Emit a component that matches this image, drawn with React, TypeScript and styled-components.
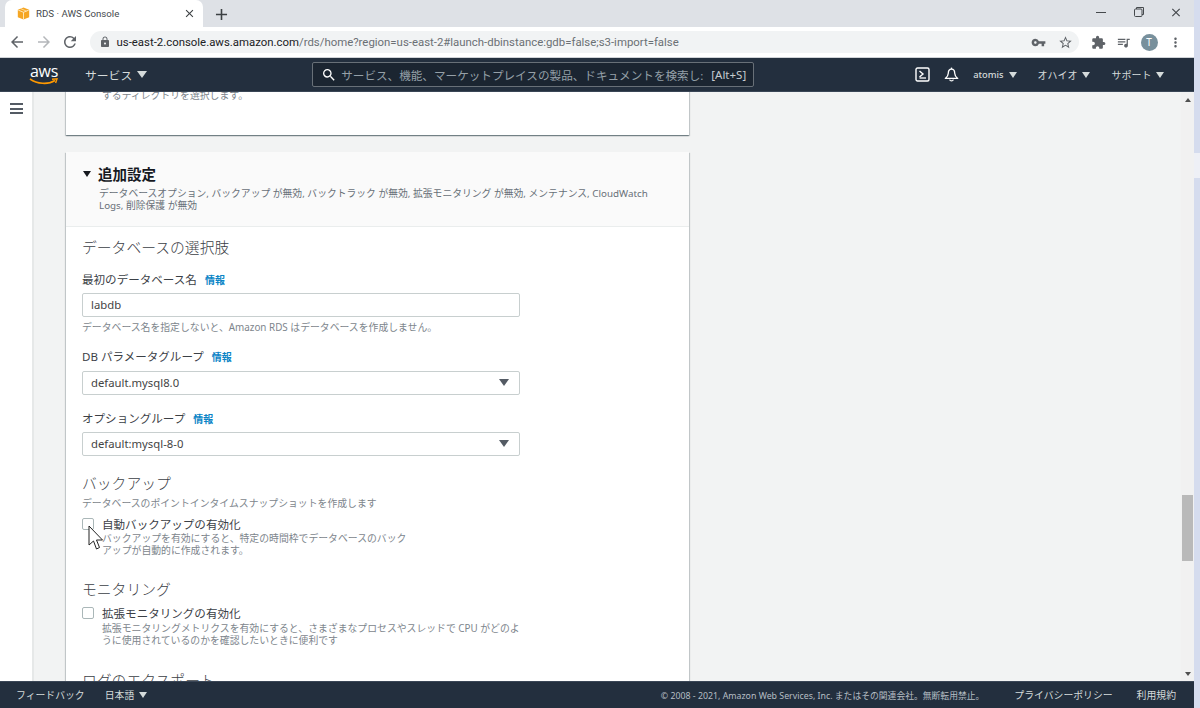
import React from 'react';
import styled, { createGlobalStyle } from 'styled-components';
import {
  MdAdd,
  MdArrowBack,
  MdArrowForward,
  MdClose,
  MdExtension,
  MdLock,
  MdMoreVert,
  MdQueueMusic,
  MdRefresh,
  MdSearch,
  MdStarBorder,
  MdVpnKey,
} from 'react-icons/md';

const FONT = `"Noto Sans", "Noto Sans CJK JP", sans-serif`;

const GlobalStyle = createGlobalStyle`
  html, body {
    margin: 0;
    padding: 0;
    height: 708px;
    overflow: hidden;
    font-family: ${FONT};
    background: #d6dcef;
  }
  * { box-sizing: border-box; }
`;

const Screen = styled.div`
  display: flex;
  width: 1200px;
  height: 708px;
  overflow: hidden;
`;
const Browser = styled.div`
  width: 1194px;
  height: 708px;
  display: flex;
  flex-direction: column;
  background: #f2f3f3;
`;
const DesktopStrip = styled.div`
  flex: 1;
  padding-top: 153px;
  background: #d5dcee;
`;
const DesktopGap = styled.div`
  height: 25px;
  background: #eef0f6;
`;

// ブラウザのタブ列
const TabStrip = styled.div`
  height: 27px;
  flex: none;
  display: flex;
  align-items: flex-end;
  padding-left: 5px;
  background: #dee1e6;
  color: #3c4043;
`;
const Tab = styled.div`
  width: 198px;
  height: 27px;
  display: flex;
  align-items: center;
  padding: 0 7px 0 12px;
  background: #fff;
  border-radius: 7px 7px 0 0;
`;
const TabTitle = styled.span`
  flex: 1;
  margin-left: 6px;
  font-size: 9.7px;
  font-family: Roboto, sans-serif;
  color: #45494d;
`;
const NewTab = styled.span`
  display: flex;
  margin-left: 9px;
  margin-bottom: 3px;
  font-size: 19px;
  color: #3c4043;
`;
const WindowControls = styled.div`
  margin-left: auto;
  align-self: stretch;
  display: flex;
  align-items: center;
  gap: 23.5px;
  padding: 0 11px 3px 0;
  color: #45494d;
`;
const WindowButton = styled.span`
  width: 14px;
  display: flex;
  justify-content: center;
  align-items: center;
`;

const Toolbar = styled.div`
  height: 31px;
  flex: none;
  display: flex;
  align-items: center;
  padding: 0 0 0 8px;
  background: #fff;
  border-bottom: 1px solid #d0d3d7;
`;
const NavButton = styled.span<{ $dim?: boolean }>`
  width: 18px;
  margin-right: 8.5px;
  display: flex;
  font-size: 18px;
  color: ${(p) => (p.$dim ? '#b4b7ba' : '#5f6368')};
`;
const Omnibox = styled.div`
  width: 989px;
  height: 22px;
  margin-left: 2px;
  padding: 0 6px 0 9px;
  display: flex;
  align-items: center;
  border-radius: 11px;
  background: #f1f3f4;
  font-family: Roboto, sans-serif;
  font-size: 11.4px;
  color: #6b7074;
  white-space: nowrap;
`;
const UrlHost = styled.span`
  color: #202124;
`;
const LockIcon = styled(MdLock)`
  font-size: 12px;
  margin-right: 6px;
  color: #5f6368;
`;
const OmniActions = styled.div`
  margin-left: auto;
  display: flex;
  align-items: center;
  gap: 12px;
  color: #5f6368;
  font-size: 15px;
`;
const ToolbarActions = styled.div`
  display: flex;
  align-items: center;
  margin-left: 12px;
  gap: 10px;
  color: #5f6368;
  font-size: 15px;
`;
const Avatar = styled.span`
  width: 17px;
  height: 17px;
  border-radius: 50%;
  display: flex;
  align-items: center;
  justify-content: center;
  background: #78909c;
  color: #fff;
  font-size: 10px;
`;

// AWS ナビゲーション
const Nav = styled.div`
  height: 34px;
  flex: none;
  display: flex;
  align-items: center;
  background: #232f3e;
  color: #d5dbdb;
  border-bottom: 1px solid #3a4656;
`;
const Logo = styled.div`
  width: 28px;
  margin-left: 30px;
  display: flex;
  flex-direction: column;
  align-items: center;
`;
const LogoText = styled.span`
  font-family: "Open Sans", sans-serif;
  font-size: 16px;
  line-height: 13px;
  color: #fff;
  letter-spacing: -0.3px;
`;
const NavMenu = styled.span<{ $left?: number; $size?: number; $strong?: boolean }>`
  display: flex;
  align-items: center;
  margin-left: ${(p) => p.$left ?? 0}px;
  font-size: ${(p) => p.$size ?? 10}px;
  font-weight: ${(p) => (p.$strong ? 500 : 400)};
  white-space: nowrap;
`;
const Caret = styled.span<{ $size?: number; $color?: string; $gap?: number }>`
  display: inline-block;
  flex: none;
  margin-left: ${(p) => p.$gap ?? 5}px;
  border-left: ${(p) => p.$size ?? 5}px solid transparent;
  border-right: ${(p) => p.$size ?? 5}px solid transparent;
  border-top: ${(p) => (p.$size ?? 5) + 2}px solid ${(p) => p.$color ?? '#d5dbdb'};
`;
const SearchBox = styled.div`
  width: 442px;
  height: 25px;
  margin-left: 165px;
  padding: 0 7px 0 8px;
  display: flex;
  align-items: center;
  background: #1b2531;
  border: 1px solid #687078;
  border-radius: 2px;
  font-size: 11.6px;
  color: #95a0a8;
  white-space: nowrap;
  overflow: hidden;
`;
const SearchIcon = styled(MdSearch)`
  flex: none;
  font-size: 16px;
  color: #fff;
  margin-right: 4px;
`;
const SearchPlaceholder = styled.span`
  width: 362px;
  overflow: hidden;
`;
const SearchKey = styled.span`
  margin-left: auto;
  color: #c6ccd0;
  font-size: 11.5px;
`;
const NavIcon = styled.span<{ $left: number }>`
  display: flex;
  margin-left: ${(p) => p.$left}px;
`;

// 本体
const Body = styled.div`
  flex: 1;
  min-height: 0;
  display: flex;
`;
const Sidebar = styled.div`
  width: 34px;
  flex: none;
  padding: 11px 0 0 10px;
  background: #fff;
  border-right: 2px solid #e6e8e8;
`;
const Burger = styled.div`
  width: 13px;
  height: 11px;
  border-top: 2px solid #545b64;
  border-bottom: 2px solid #545b64;
  position: relative;
  &::after {
    content: '';
    position: absolute;
    left: 0;
    right: 0;
    top: 2.5px;
    height: 2px;
    background: #545b64;
  }
`;
const Main = styled.div`
  flex: 1;
  min-width: 0;
  overflow: hidden;
  padding-left: 32px;
`;
const Card = styled.div`
  width: 622.5px;
  background: #fff;
  box-shadow: 0 1px 1px 0 rgba(0, 28, 36, 0.35), 1px 1px 1px 0 rgba(0, 28, 36, 0.15),
    -1px 1px 1px 0 rgba(0, 28, 36, 0.15);
`;
const TopCard = styled(Card)`
  height: 50px;
  margin-top: -7px;
  padding: 3px 0 0 36px;
`;
const SettingsCard = styled(Card)`
  margin-top: 17px;
  padding-bottom: 30px;
`;
const CardHeader = styled.div`
  height: 75px;
  padding: 10px 16px 0 16px;
  background: #fafafa;
  border-bottom: 1px solid #eaeded;
`;
const HeaderTitle = styled.div`
  display: flex;
  align-items: center;
  height: 22px;
  font-size: 14.5px;
  font-weight: 700;
  color: #16191f;
`;
const HeaderCaret = styled(Caret)`
  margin: 2px 7px 0 1px;
  border-left-width: 4px;
  border-right-width: 4px;
  border-top-width: 6px;
`;
const HeaderDesc = styled.div`
  margin: 4px 0 0 17px;
  font-size: 9.8px;
  line-height: 12px;
  color: #687078;
  white-space: nowrap;
`;
const CardBody = styled.div`
  padding: 0 16px;
`;
const SectionTitle = styled.div<{ $top: number }>`
  margin-top: ${(p) => p.$top}px;
  height: 22px;
  font-size: 14.8px;
  font-weight: 300;
  line-height: 22px;
  color: #3b4046;
  white-space: nowrap;
`;
const Label = styled.div<{ $top: number }>`
  margin-top: ${(p) => p.$top}px;
  height: 18px;
  font-size: 11.55px;
  line-height: 18px;
  color: #3b4046;
  white-space: nowrap;
`;
const Info = styled.span`
  margin-left: 8px;
  font-size: 10px;
  font-weight: 700;
  color: #0a84c6;
`;
const Input = styled.div<{ $top: number }>`
  width: 438px;
  height: 24px;
  margin-top: ${(p) => p.$top}px;
  padding: 0 10px 2px 8px;
  display: flex;
  align-items: center;
  justify-content: space-between;
  border: 1px solid #c8cfcf;
  border-radius: 2px;
  font-size: 11.3px;
  color: #444;
`;
const Hint = styled.div<{ $top: number }>`
  margin-top: ${(p) => p.$top}px;
  height: 14px;
  font-size: 9.85px;
  line-height: 14px;
  color: #7d858c;
  white-space: nowrap;
`;
const CheckRow = styled.div<{ $top: number }>`
  margin-top: ${(p) => p.$top}px;
  display: flex;
  height: 18px;
  align-items: center;
  font-size: 11.55px;
  color: #3b4046;
`;
const Check = styled.span`
  width: 12px;
  height: 12px;
  margin-right: 8px;
  border: 1px solid #aab7b8;
  border-radius: 2px;
  background: #fff;
`;
const CheckDesc = styled.div<{ $top: number }>`
  margin: ${(p) => p.$top}px 0 0 20px;
  font-size: 9.85px;
  line-height: 12px;
  color: #7d858c;
  white-space: nowrap;
`;
const Cursor = styled.svg`
  position: absolute;
  left: 88px;
  top: 525px;
`;

const Scrollbar = styled.div`
  width: 13px;
  flex: none;
  display: flex;
  flex-direction: column;
  align-items: center;
  background: #f1f1f1;
  padding: 6px 0 5px;
`;
const ScrollUp = styled.span`
  border-left: 3.5px solid transparent;
  border-right: 3.5px solid transparent;
  border-bottom: 4px solid #505050;
`;
const ScrollDown = styled.span`
  margin-top: auto;
  border-left: 3.5px solid transparent;
  border-right: 3.5px solid transparent;
  border-top: 4px solid #505050;
`;
const ScrollThumb = styled.div`
  width: 11px;
  height: 66px;
  margin-top: 393px;
  background: #b9b9b9;
`;

// フッター
const Footer = styled.div`
  height: 27px;
  flex: none;
  display: flex;
  align-items: center;
  padding: 0 18px 0 16px;
  background: #232f3e;
  border-top: 1px solid #3a4656;
  color: #d5dbdb;
  font-size: 9.85px;
  white-space: nowrap;
`;
const FooterLink = styled.span<{ $left: number }>`
  display: flex;
  align-items: center;
  margin-left: ${(p) => p.$left}px;
`;
const Copyright = styled.span`
  margin-left: auto;
  font-size: 8.8px;
  color: #b6bec4;
`;

const Favicon = () => (
  <svg width="13" height="13" viewBox="0 0 16 16">
    <path d="M8 0.5 15 3.5 15 12.5 8 15.5 1 12.5 1 3.5Z" fill="#f5a623" />
    <path d="M8 6.5V15.5" stroke="#fff3d9" strokeWidth="1" />
    <path d="M1.5 3.8 8 6.5 14.5 3.8" fill="none" stroke="#fff3d9" strokeWidth="1" />
    <path d="M4.5 2 11.5 5" stroke="#fff3d9" strokeWidth="0.8" />
  </svg>
);

const Smile = () => (
  <svg width="30" height="7" viewBox="0 0 30 7">
    <path d="M1 1C8 6 19 7 26 2.5" fill="none" stroke="#f90" strokeWidth="1.6" />
    <path d="M23 1.2 28 0.8 26.6 5" fill="none" stroke="#f90" strokeWidth="1.4" />
  </svg>
);

const CloudShell = () => (
  <svg width="15" height="15" viewBox="0 0 15 15">
    <rect x="1" y="1" width="13" height="13" rx="1.5" fill="none" stroke="#fff" strokeWidth="1.4" />
    <path d="M4.5 4 8 7 4.5 10" fill="none" stroke="#fff" strokeWidth="1.4" />
    <path d="M4.5 11H11" stroke="#fff" strokeWidth="1.3" />
  </svg>
);

const BellIcon = () => (
  <svg width="15" height="15" viewBox="0 0 15 15">
    <path
      d="M7.5 2.2C5.2 2.2 4.3 4 4.3 6.2 4.3 8.6 3.2 9.8 1.3 11.4H13.7C11.8 9.8 10.7 8.6 10.7 6.2 10.7 4 9.8 2.2 7.5 2.2Z"
      fill="none"
      stroke="#fff"
      strokeWidth="1.3"
      strokeLinejoin="round"
    />
    <path d="M7.5 0.6V2.2" stroke="#fff" strokeWidth="1.3" />
    <path d="M5.6 12.6C6.2 14.4 8.8 14.4 9.4 12.6" fill="none" stroke="#fff" strokeWidth="1.2" />
  </svg>
);

const Restore = () => (
  <svg width="10" height="10" viewBox="0 0 10 10">
    <rect x="0.5" y="2" width="7.5" height="7.5" rx="1" fill="none" stroke="#45494d" />
    <path d="M2.5 2V0.5H9.5V7.5H8" fill="none" stroke="#45494d" />
  </svg>
);

const Minimize = () => (
  <svg width="10" height="10" viewBox="0 0 10 10">
    <path d="M0 5.5H10" stroke="#45494d" />
  </svg>
);

const App: React.FC = () => (
  <Screen>
    <GlobalStyle />
    <Browser>
      <TabStrip>
        <Tab>
          <Favicon />
          <TabTitle>RDS · AWS Console</TabTitle>
          <MdClose size={13} />
        </Tab>
        <NewTab>
          <MdAdd />
        </NewTab>
        <WindowControls>
          <WindowButton>
            <Minimize />
          </WindowButton>
          <WindowButton>
            <Restore />
          </WindowButton>
          <WindowButton>
            <MdClose size={15} />
          </WindowButton>
        </WindowControls>
      </TabStrip>
      <Toolbar>
        <NavButton>
          <MdArrowBack />
        </NavButton>
        <NavButton $dim>
          <MdArrowForward />
        </NavButton>
        <NavButton>
          <MdRefresh />
        </NavButton>
        <Omnibox>
          <LockIcon />
          <UrlHost>us-east-2.console.aws.amazon.com</UrlHost>
          /rds/home?region=us-east-2#launch-dbinstance:gdb=false;s3-import=false
          <OmniActions>
            <MdVpnKey />
            <MdStarBorder />
          </OmniActions>
        </Omnibox>
        <ToolbarActions>
          <MdExtension />
          <MdQueueMusic />
          <Avatar>T</Avatar>
          <MdMoreVert />
        </ToolbarActions>
      </Toolbar>
      <Nav>
        <Logo>
          <LogoText>aws</LogoText>
          <Smile />
        </Logo>
        <NavMenu $left={27} $size={11.8}>
          サービス
          <Caret />
        </NavMenu>
        <SearchBox>
          <SearchIcon />
          <SearchPlaceholder>
            サービス、機能、マーケットプレイスの製品、ドキュメントを検索し:
          </SearchPlaceholder>
          <SearchKey>[Alt+S]</SearchKey>
        </SearchBox>
        <NavIcon $left={161}>
          <CloudShell />
        </NavIcon>
        <NavIcon $left={14}>
          <BellIcon />
        </NavIcon>
        <NavMenu $left={14} $size={9.3} $strong>
          atomis
          <Caret $size={4} />
        </NavMenu>
        <NavMenu $left={21}>
          オハイオ
          <Caret $size={4} />
        </NavMenu>
        <NavMenu $left={21}>
          サポート
          <Caret $size={4} />
        </NavMenu>
      </Nav>
      <Body>
        <Sidebar>
          <Burger />
        </Sidebar>
        <Main>
          <TopCard>
            <Hint $top={0}>するディレクトリを選択します。</Hint>
          </TopCard>
          <SettingsCard>
            <CardHeader>
              <HeaderTitle>
                <HeaderCaret $color="#16191f" />
                追加設定
              </HeaderTitle>
              <HeaderDesc>
                データベースオプション, バックアップ が無効, バックトラック が無効, 拡張モニタリング が無効, メンテナンス, CloudWatch
                <br />
                Logs, 削除保護 が無効
              </HeaderDesc>
            </CardHeader>
            <CardBody>
              <SectionTitle $top={9}>データベースの選択肢</SectionTitle>
              <Label $top={13}>
                最初のデータベース名<Info>情報</Info>
              </Label>
              <Input $top={4}>labdb</Input>
              <Hint $top={3}>データベース名を指定しないと、Amazon RDS はデータベースを作成しません。</Hint>
              <Label $top={14}>
                DB パラメータグループ<Info>情報</Info>
              </Label>
              <Input $top={5}>
                default.mysql8.0
                <Caret $size={5} $color="#545b64" />
              </Input>
              <Label $top={15}>
                オプショングループ<Info>情報</Info>
              </Label>
              <Input $top={4}>
                default:mysql-8-0
                <Caret $size={5} $color="#545b64" />
              </Input>
              <SectionTitle $top={16}>バックアップ</SectionTitle>
              <Hint $top={2}>データベースのポイントインタイムスナップショットを作成します</Hint>
              <CheckRow $top={5}>
                <Check />
                自動バックアップの有効化
              </CheckRow>
              <CheckDesc $top={-1}>
                バックアップを有効にすると、特定の時間枠でデータベースのバック
                <br />
                アップが自動的に作成されます。
              </CheckDesc>
              <SectionTitle $top={22}>モニタリング</SectionTitle>
              <CheckRow $top={4}>
                <Check />
                拡張モニタリングの有効化
              </CheckRow>
              <CheckDesc $top={0}>
                拡張モニタリングメトリクスを有効にすると、さまざまなプロセスやスレッドで CPU がどのよ
                <br />
                うに使用されているのかを確認したいときに便利です
              </CheckDesc>
              <SectionTitle $top={23}>ログのエクスポート</SectionTitle>
            </CardBody>
          </SettingsCard>
        </Main>
        <Scrollbar>
          <ScrollUp />
          <ScrollThumb />
          <ScrollDown />
        </Scrollbar>
      </Body>
      <Footer>
        フィードバック
        <FooterLink $left={20}>
          日本語
          <Caret $size={4} />
        </FooterLink>
        <Copyright>© 2008 - 2021, Amazon Web Services, Inc. またはその関連会社。無断転用禁止。</Copyright>
        <FooterLink $left={30}>プライバシーポリシー</FooterLink>
        <FooterLink $left={24}>利用規約</FooterLink>
      </Footer>
    </Browser>
    <DesktopStrip>
      <DesktopGap />
    </DesktopStrip>
    <Cursor width="16" height="26" viewBox="0 0 16 26">
      <path d="M1 1V20L5.5 16 8.5 24 11.5 22.5 8.5 15H14.5Z" fill="#fff" stroke="#222" strokeWidth="1" />
    </Cursor>
  </Screen>
);

export default App;
